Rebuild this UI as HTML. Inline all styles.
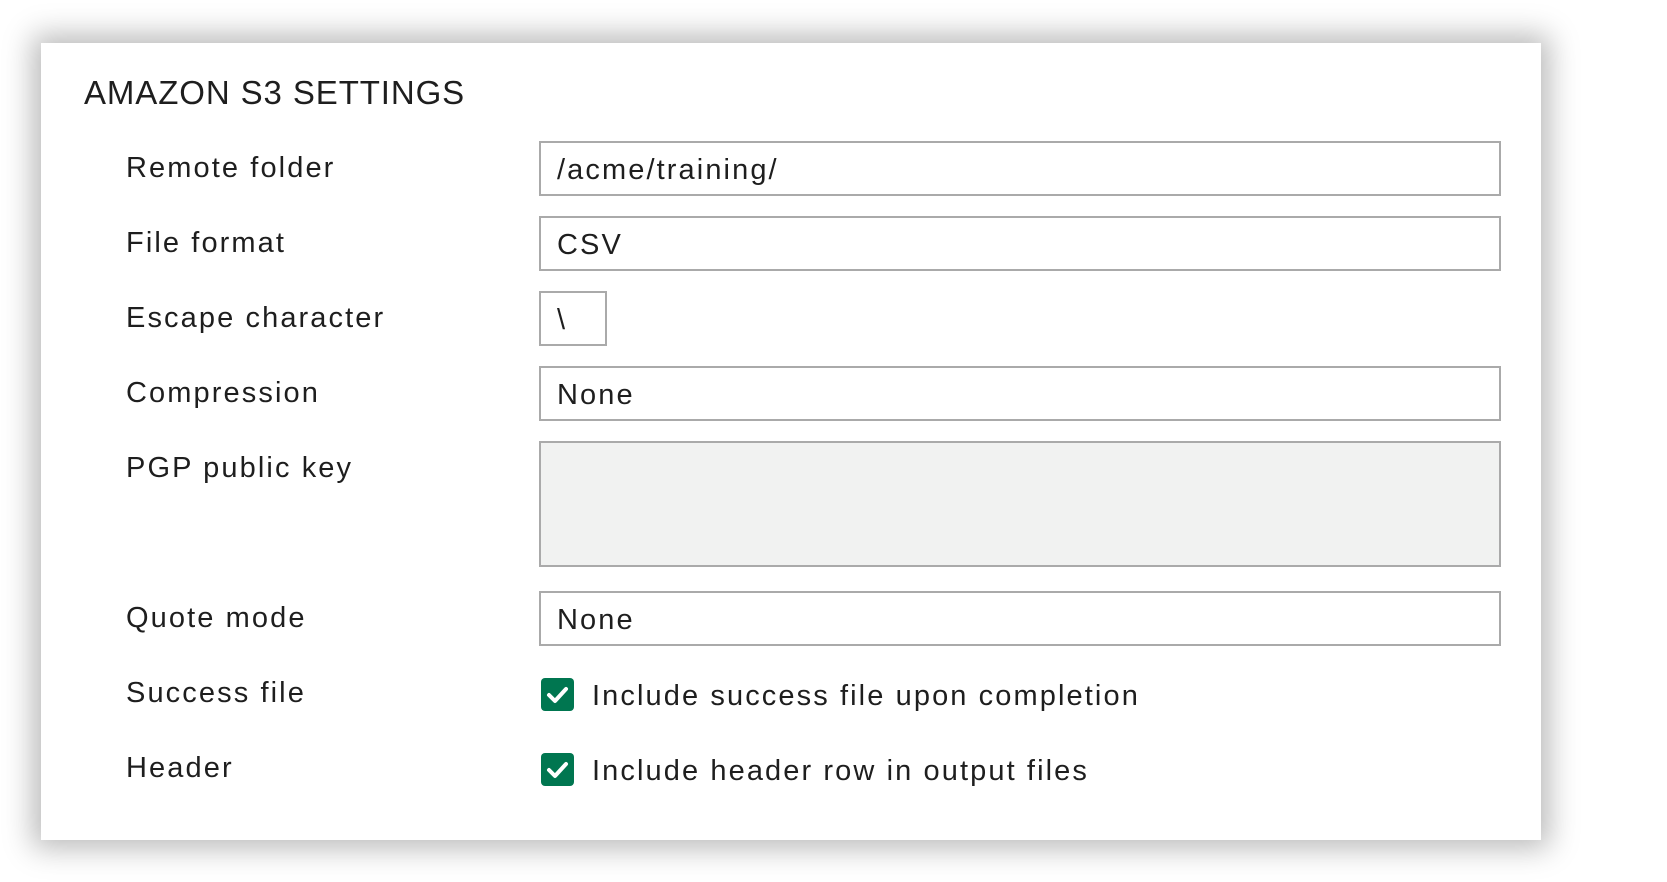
<!DOCTYPE html>
<html><head><style>
body{margin:0;width:1667px;height:882px;background:#fff;position:relative;overflow:hidden;font-family:"Liberation Sans",sans-serif;color:#1e1e1e}
.card{position:absolute;left:41px;top:43px;width:1500px;height:797px;background:#fff;box-shadow:0 0 28px 8px rgba(0,0,0,.28)}
.t{position:absolute;font-size:33px;left:84px;top:74px;letter-spacing:0.9px}
.l{position:absolute;left:126px;font-size:29px;letter-spacing:2.1px}
.in{position:absolute;left:539px;height:51px;border:2px solid #aaa;box-sizing:content-box;font-size:29px;line-height:54px;padding-left:16px;width:942px;letter-spacing:2.1px}
.cb{position:absolute;left:541px;width:33px;height:33px;border-radius:4px;background:#007650}
.ct{position:absolute;left:592px;font-size:29px;letter-spacing:2.1px}
</style></head><body>
<div class="card"></div>
<div class="t">AMAZON S3 SETTINGS</div>
<div class="l" style="top:152px">Remote folder</div>
<div class="in" style="top:141px">/acme/training/</div>
<div class="l" style="top:227px">File format</div>
<div class="in" style="top:216px">CSV</div>
<div class="l" style="top:302px">Escape character</div>
<div class="in" style="top:291px;width:48px">\</div>
<div class="l" style="top:377px">Compression</div>
<div class="in" style="top:366px">None</div>
<div class="l" style="top:452px">PGP public key</div>
<div class="in" style="top:441px;height:122px;background:#f1f2f1"></div>
<div class="l" style="top:602px">Quote mode</div>
<div class="in" style="top:591px">None</div>
<div class="l" style="top:677px">Success file</div>
<div class="cb" style="top:678px"><svg width="33" height="33"><path d="M8 17l6 6 11-12" stroke="#fff" stroke-width="4" fill="none" stroke-linecap="round" stroke-linejoin="round"/></svg></div>
<div class="ct" style="top:680px">Include success file upon completion</div>
<div class="l" style="top:752px">Header</div>
<div class="cb" style="top:753px"><svg width="33" height="33"><path d="M8 17l6 6 11-12" stroke="#fff" stroke-width="4" fill="none" stroke-linecap="round" stroke-linejoin="round"/></svg></div>
<div class="ct" style="top:755px">Include header row in output files</div>
</body></html>
